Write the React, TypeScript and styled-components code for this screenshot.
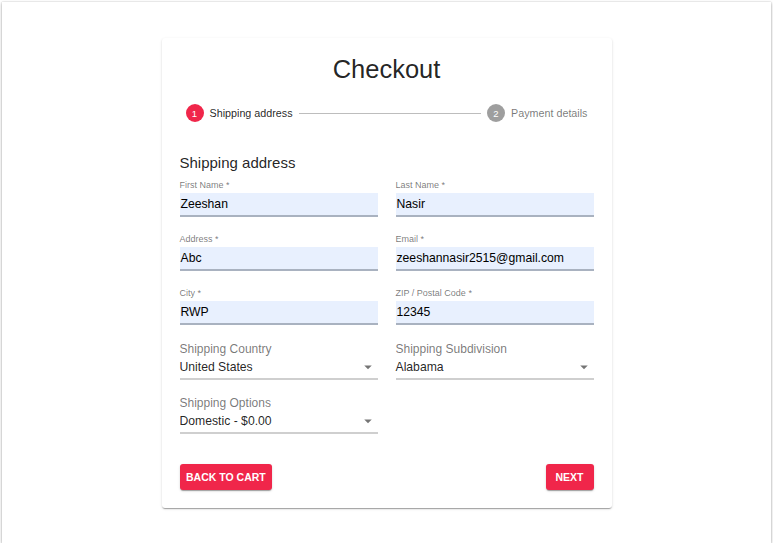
import React from 'react';
import styled, { createGlobalStyle } from 'styled-components';

const GlobalStyle = createGlobalStyle`
  html, body {
    margin: 0;
    padding: 0;
    background: #ffffff;
  }
  body {
    font-family: "Liberation Sans", Arial, sans-serif;
    color: rgba(0, 0, 0, 0.87);
  }
`;

const ACCENT = '#f0264a';

const Frame = styled.div`
  box-sizing: border-box;
  margin: 2px 2px 0 2px;
  height: 541px;
  background: #fff;
  box-shadow: 0 1px 3px rgba(0, 0, 0, 0.35), 0 0 1px rgba(0, 0, 0, 0.2);
  padding-top: 36px;
`;

const Card = styled.div`
  box-sizing: border-box;
  width: 450px;
  margin: 0 auto;
  padding: 14px 18px 18px;
  background: #fff;
  border-radius: 3px;
  box-shadow: 0 2px 1px -1px rgba(0, 0, 0, 0.2), 0 1px 1px 0 rgba(0, 0, 0, 0.14),
    0 1px 3px 0 rgba(0, 0, 0, 0.12);
`;

const Title = styled.h1`
  margin: 0;
  text-align: center;
  font-size: 25.5px;
  font-weight: 400;
  line-height: 34px;
  color: rgba(0, 0, 0, 0.87);
`;

const Stepper = styled.div`
  display: flex;
  align-items: center;
  padding: 18px 0;
`;

const Step = styled.div`
  display: flex;
  align-items: center;
  gap: 6px;
  padding: 0 6px;
`;

const StepIcon = styled.span<{ $active?: boolean }>`
  width: 18px;
  height: 18px;
  border-radius: 50%;
  background: ${(p) => (p.$active ? ACCENT : 'rgba(0, 0, 0, 0.38)')};
  color: #fff;
  font-size: 9.5px;
  font-weight: 400;
  display: flex;
  align-items: center;
  justify-content: center;
`;

const StepLabel = styled.span<{ $active?: boolean }>`
  font-size: 10.75px;
  color: ${(p) => (p.$active ? 'rgba(0, 0, 0, 0.87)' : 'rgba(0, 0, 0, 0.54)')};
`;

const Connector = styled.span`
  flex: 1;
  border-top: 1px solid #bdbdbd;
`;

const Heading = styled.h2`
  margin: 12px 0 6px;
  font-size: 15px;
  font-weight: 400;
  line-height: 22px;
`;

const Grid = styled.div`
  display: grid;
  grid-template-columns: 1fr 1fr;
  grid-auto-rows: 54px;
  column-gap: 18px;
`;

const Field = styled.div`
  display: flex;
  flex-direction: column;
`;

const SmallLabel = styled.label`
  font-size: 9px;
  line-height: 11px;
  color: rgba(0, 0, 0, 0.54);
  margin-bottom: 2px;
`;

const FilledInput = styled.div`
  box-sizing: border-box;
  height: 24px;
  background: #e8f0fe;
  border-bottom: 2px solid #a9b2c0;
  font-size: 12.2px;
  line-height: 22px;
  padding: 0 1px;
  color: #000;
`;

const SelectLabel = styled.label`
  font-size: 12px;
  line-height: 14px;
  color: rgba(0, 0, 0, 0.54);
`;

const SelectBox = styled.div`
  box-sizing: border-box;
  display: flex;
  align-items: center;
  justify-content: space-between;
  height: 22px;
  margin-top: 2px;
  border-bottom: 2px solid #cfcfcf;
  font-size: 12.2px;
  color: rgba(0, 0, 0, 0.87);
  padding-bottom: 2px;
`;

const Arrow = styled.svg`
  width: 18px;
  height: 18px;
  margin-right: 1px;
  fill: rgba(0, 0, 0, 0.54);
`;

const Actions = styled.div`
  display: flex;
  justify-content: space-between;
  margin-top: 14px;
`;

const Button = styled.button`
  box-sizing: border-box;
  min-width: 48px;
  height: 26px;
  padding: 0 6.5px;
  border: none;
  border-radius: 3px;
  background: ${ACCENT};
  color: #fff;
  font-family: "Liberation Sans", Arial, sans-serif;
  font-size: 10.5px;
  font-weight: 700;
  text-transform: uppercase;
  box-shadow: 0 2px 1px -1px rgba(0, 0, 0, 0.2), 0 1px 1px 0 rgba(0, 0, 0, 0.14),
    0 1px 3px 0 rgba(0, 0, 0, 0.12);
`;

const textFields = [
  { label: 'First Name', value: 'Zeeshan' },
  { label: 'Last Name', value: 'Nasir' },
  { label: 'Address', value: 'Abc' },
  { label: 'Email', value: 'zeeshannasir2515@gmail.com' },
  { label: 'City', value: 'RWP' },
  { label: 'ZIP / Postal Code', value: '12345' },
];

const selects = [
  { label: 'Shipping Country', value: 'United States' },
  { label: 'Shipping Subdivision', value: 'Alabama' },
  { label: 'Shipping Options', value: 'Domestic - $0.00' },
];

function DropArrow() {
  return (
    <Arrow viewBox="0 0 24 24">
      <path d="M7 10l5 5 5-5z" />
    </Arrow>
  );
}

export default function App() {
  return (
    <>
      <GlobalStyle />
      <Frame>
        <Card>
          <Title>Checkout</Title>
          <Stepper>
            <Step>
              <StepIcon $active>1</StepIcon>
              <StepLabel $active>Shipping address</StepLabel>
            </Step>
            <Connector />
            <Step>
              <StepIcon>2</StepIcon>
              <StepLabel>Payment details</StepLabel>
            </Step>
          </Stepper>

          <Heading>Shipping address</Heading>
          <Grid>
            {textFields.map((f) => (
              <Field key={f.label}>
                <SmallLabel>{f.label} *</SmallLabel>
                <FilledInput>{f.value}</FilledInput>
              </Field>
            ))}
            {selects.map((s) => (
              <Field key={s.label}>
                <SelectLabel>{s.label}</SelectLabel>
                <SelectBox>
                  <span>{s.value}</span>
                  <DropArrow />
                </SelectBox>
              </Field>
            ))}
          </Grid>

          <Actions>
            <Button>Back to cart</Button>
            <Button>Next</Button>
          </Actions>
        </Card>
      </Frame>
    </>
  );
}
